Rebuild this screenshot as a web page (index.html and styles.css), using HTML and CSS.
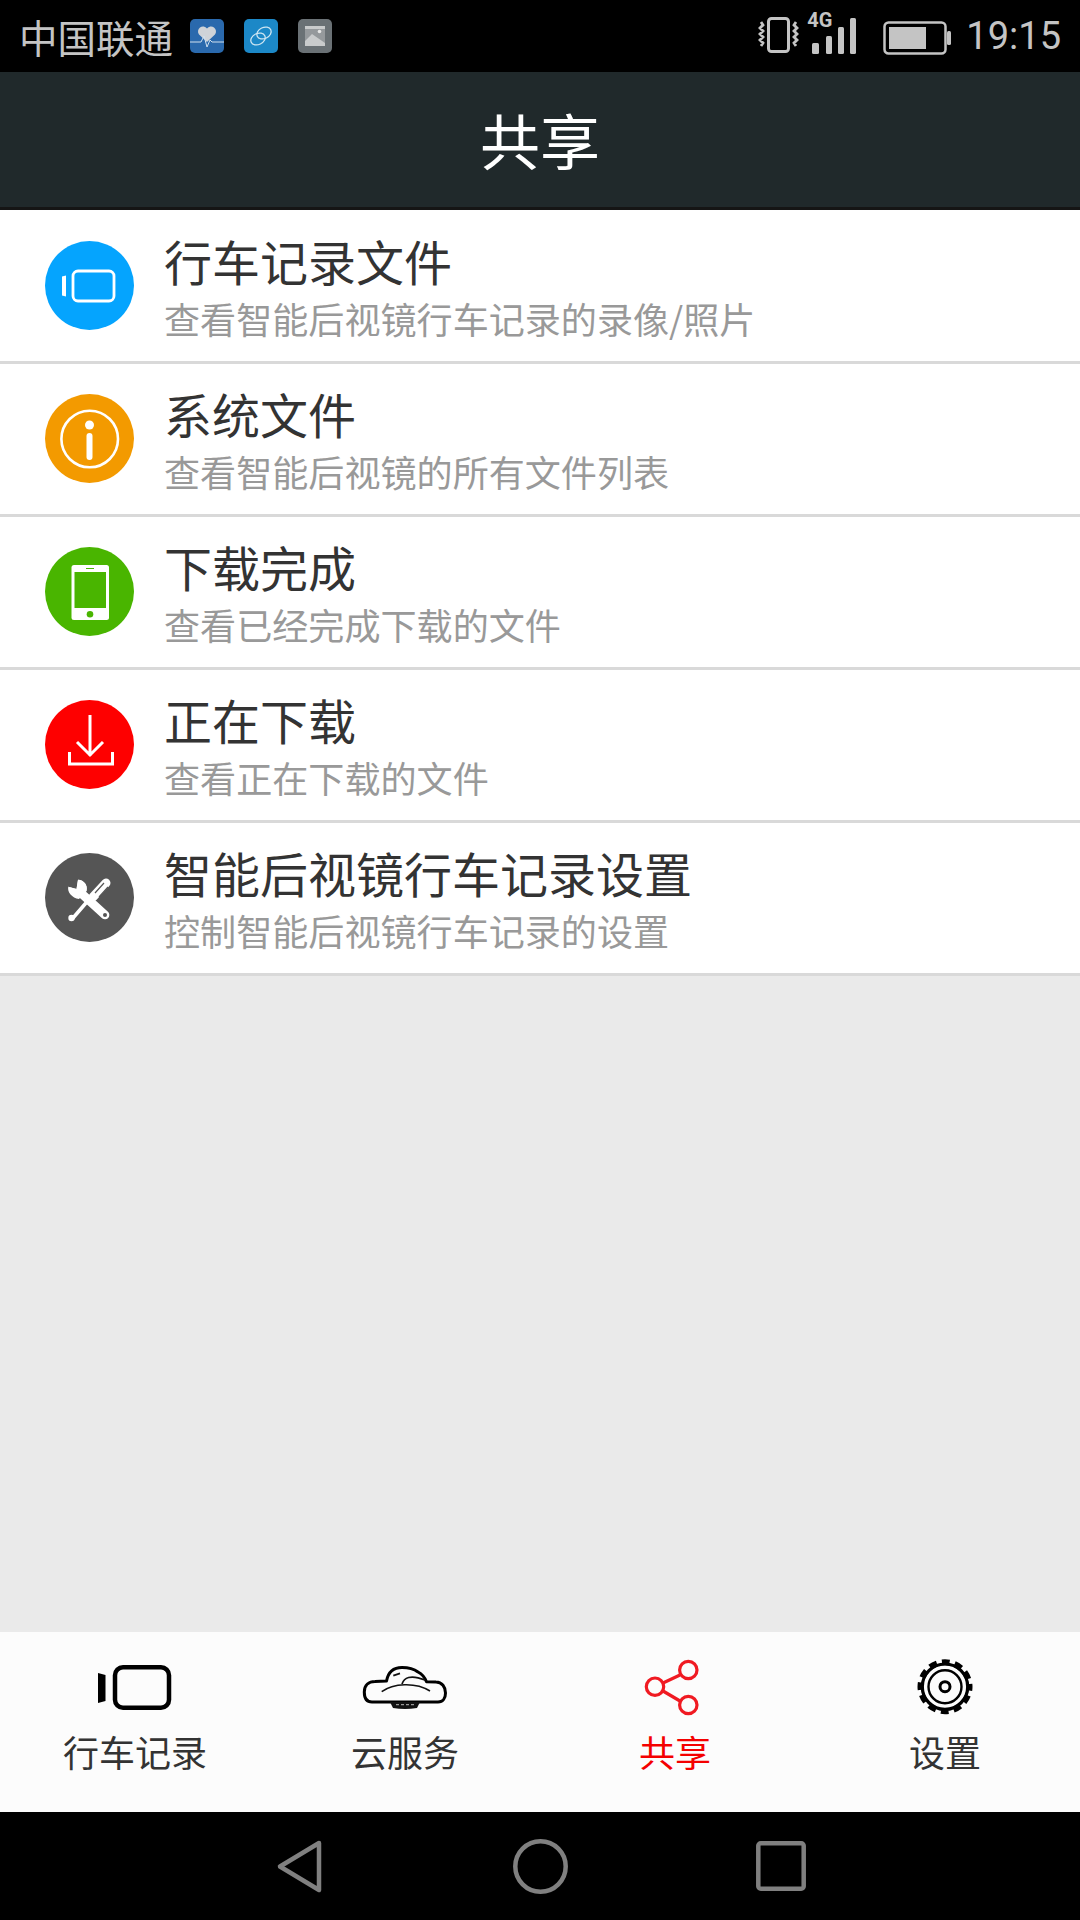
FILE: index.html
```html
<!DOCTYPE html>
<html lang="zh-CN">
<head>
<meta charset="utf-8">
<title>共享</title>
<link rel="stylesheet" href="styles.css">
</head>
<body>
<div class="screen">
  <header class="status">
    <div class="status-left">
      <span class="carrier">中国联通</span>
      <svg class="app-icon" viewBox="0 0 34 34"><rect width="34" height="34" rx="5" fill="#2a69ad"/><path d="M17 23 9 15.500a4.800 4.800 0 0 1 8-6 4.800 4.800 0 0 1 8 6z" fill="#cfd3d8"/><path d="M0 23h11l3-6 3 11 3-7 2 2h12" fill="none" stroke="#cfe0ee" stroke-width="1"/></svg>
      <svg class="app-icon" viewBox="0 0 34 34"><rect width="34" height="34" rx="5" fill="#1c88c7"/><ellipse cx="20" cy="14" rx="7.500" ry="5.500" fill="none" stroke="#cfe6f2" stroke-width="1.300" transform="rotate(-25 20 14)"/><ellipse cx="14" cy="20" rx="7.500" ry="5.500" fill="none" stroke="#cfe6f2" stroke-width="1.300" transform="rotate(-25 14 20)"/></svg>
      <svg class="app-icon" viewBox="0 0 34 34"><rect width="34" height="34" rx="5" fill="#6a7175"/><rect x="7" y="7" width="20" height="20" fill="#c9cbcc"/><path d="M7 22l7-7 13 9V10H7z" fill="#6a7175" opacity=".55"/><circle cx="21.500" cy="12.500" r="1.800" fill="#e6e6e6"/></svg>
    </div>
    <div class="status-right">
      <svg class="vibrate" viewBox="0 0 42 40"><rect x="10.500" y="2.500" width="20" height="33" rx="3" fill="none" stroke="#c4c4c4" stroke-width="3"/><path d="M3 6l2 3-3 3 3 3-3 3 3 3-3 3 3 3-2 3M38 6l-2 3 3 3-3 3 3 3-3 3 3 3-3 3 2 3" fill="none" stroke="#c4c4c4" stroke-width="2.800"/></svg>
      <div class="signal">
        <span class="net">4G</span>
        <svg class="bars" viewBox="0 0 48 36"><rect x="4" y="25" width="7" height="11" rx="1.500" fill="#c4c4c4"/><rect x="18" y="18" width="6" height="18" rx="1.500" fill="#c4c4c4"/><rect x="30" y="9" width="6" height="27" rx="1.500" fill="#c4c4c4"/><rect x="42" y="0" width="6" height="36" rx="1.500" fill="#c4c4c4"/></svg>
      </div>
      <svg class="battery" viewBox="0 0 68 34"><rect x="1.500" y="1.500" width="61" height="31" rx="4" fill="none" stroke="#c4c4c4" stroke-width="2.500"/><rect x="6" y="6" width="37" height="22" fill="#c4c4c4"/><rect x="64" y="10" width="4" height="14" rx="1.500" fill="#c4c4c4"/></svg>
      <span class="clock">19:15</span>
    </div>
  </header>

  <div class="appbar">共享</div>

  <main class="content">
    <ul class="list">
      <li class="row">
        <svg class="badge" viewBox="0 0 89 89"><circle cx="44.500" cy="44.500" r="44.500" fill="#05a4fe"/><path d="M17 35.500l4-1v21l-4-1z" fill="#fff"/><rect x="28" y="30" width="41" height="30" rx="5" fill="none" stroke="#fff" stroke-width="2.800"/></svg>
        <div class="text"><h2 class="title">行车记录文件</h2><p class="sub">查看智能后视镜行车记录的录像/照片</p></div>
      </li>
      <li class="row">
        <svg class="badge" viewBox="0 0 89 89"><circle cx="44.500" cy="44.500" r="44.500" fill="#f39a00"/><circle cx="44.700" cy="45" r="28.300" fill="none" stroke="#fff" stroke-width="2.600"/><circle cx="44.500" cy="31" r="4.500" fill="#fff"/><path d="M44.500 42v21" stroke="#fff" stroke-width="6" stroke-linecap="round"/></svg>
        <div class="text"><h2 class="title">系统文件</h2><p class="sub">查看智能后视镜的所有文件列表</p></div>
      </li>
      <li class="row">
        <svg class="badge" viewBox="0 0 89 89"><circle cx="44.500" cy="44.500" r="44.500" fill="#49b500"/><rect x="26.500" y="18" width="37.500" height="55" rx="2.500" fill="#fff"/><rect x="29.500" y="25" width="31.500" height="36" fill="#49b500"/><circle cx="45" cy="67.300" r="3.300" fill="#49b500"/><path d="M41 21.500h8" stroke="#49b500" stroke-width="1"/></svg>
        <div class="text"><h2 class="title">下载完成</h2><p class="sub">查看已经完成下载的文件</p></div>
      </li>
      <li class="row">
        <svg class="badge" viewBox="0 0 89 89"><circle cx="44.500" cy="44.500" r="44.500" fill="#fe0000"/><path d="M45 15v41M32 42l13 13 13-13M24.500 52v12h43V52" fill="none" stroke="#fff" stroke-width="3"/></svg>
        <div class="text"><h2 class="title">正在下载</h2><p class="sub">查看正在下载的文件</p></div>
      </li>
      <li class="row">
        <svg class="badge" viewBox="0 0 89 89"><circle cx="44.500" cy="44.500" r="44.500" fill="#555"/><path d="M28 65 43.500 47" stroke="#fff" stroke-width="3.500" stroke-linecap="round"/><circle cx="26.500" cy="65" r="3.200" fill="#fff"/><path d="M48 44 61 30" stroke="#fff" stroke-width="9" stroke-linecap="round"/><path d="M50 40l9-10M54 44l9-10" stroke="#555" stroke-width="1.200"/><path d="M23.300 33.700 31.500 36 33 26.700C39 27 43 32 41.500 38L36 42.500 60 62" fill="#fff"/><path d="M23.300 33.700 31.500 36 33 26.700C39 27 43 32 41.500 38L34 46C27 45 22 39 23.300 33.700Z" fill="#fff"/><path d="M37 41 60 62" stroke="#fff" stroke-width="8.700" stroke-linecap="round"/><circle cx="60" cy="62" r="2" fill="#555"/></svg>
        <div class="text"><h2 class="title">智能后视镜行车记录设置</h2><p class="sub">控制智能后视镜行车记录的设置</p></div>
      </li>
    </ul>
  </main>

  <nav class="tabs">
    <div class="tab">
      <svg class="tab-icon" viewBox="0 0 90 60"><path d="M8 17l7.500 2v26l-7.500 2z" fill="#000"/><rect x="25" y="11.200" width="54" height="40.600" rx="8" fill="none" stroke="#000" stroke-width="4.500"/></svg>
      <span class="tab-label">行车记录</span>
    </div>
    <div class="tab">
      <svg class="tab-icon" viewBox="0 0 90 60"><path d="M12 46C6 46 4.300 42 4.300 36 4.300 29 9 25.500 15 25.500L26.500 25C28 17 33 11.500 42 11.500 49 11.500 54 13 58 16 62 18 65 22 66.500 25.700L76 26C82 26 85.500 31 85.500 37 85.500 42 83 46 78 46Z" fill="none" stroke="#000" stroke-width="3" stroke-linejoin="round"/><path d="M21.700 35.700C33 27 56 26 70 35" fill="none" stroke="#111" stroke-width="1.500"/><path d="M42 28C44 22 50 18 65 24M33.300 19.700 40 17.300" fill="none" stroke="#111" stroke-width="1.800"/><path d="M30 46H60L57 52Q45 54 33 52Z" fill="#111"/><path d="M36 48.700H54" stroke="#999" stroke-width="1.200" stroke-dasharray="3 2"/></svg>
      <span class="tab-label">云服务</span>
    </div>
    <div class="tab active">
      <svg class="tab-icon" viewBox="0 0 90 60"><g fill="none" stroke="#f01a22" stroke-width="3.200"><circle cx="25" cy="30.700" r="8.700"/><circle cx="58.300" cy="14" r="8.700"/><circle cx="58.300" cy="49" r="8.700"/><path d="M33 27l17-8M33 35l17 10"/></g></svg>
      <span class="tab-label">共享</span>
    </div>
    <div class="tab">
      <svg class="tab-icon" viewBox="0 0 90 60"><g fill="none" stroke="#000"><circle cx="45" cy="30.700" r="22.700" stroke-width="3.200"/><circle cx="45" cy="30.700" r="16.500" stroke-width="2.400"/><circle cx="45" cy="30.700" r="5" stroke-width="3"/><circle cx="45" cy="30.700" r="24.500" stroke-width="6" stroke-dasharray="7.700 5.130" stroke-dashoffset="3.850"/></g></svg>
      <span class="tab-label">设置</span>
    </div>
  </nav>

  <footer class="sysnav">
    <svg class="sys back" viewBox="0 0 47 55"><path d="M43 4 4 27.500 43 51z" fill="none" stroke="#808080" stroke-width="4.500" stroke-linejoin="round"/></svg>
    <svg class="sys home" viewBox="0 0 55 55"><circle cx="27.500" cy="27.500" r="25.200" fill="none" stroke="#808080" stroke-width="4.500"/></svg>
    <svg class="sys recent" viewBox="0 0 50 50"><rect x="2.300" y="2.300" width="45.400" height="45.400" rx="2.500" fill="none" stroke="#808080" stroke-width="4.500"/></svg>
  </footer>
</div>
</body>
</html>
```

FILE: styles.css
```css
* { box-sizing: border-box; }
html, body { margin: 0; padding: 0; }
body { width: 1080px; height: 1920px; overflow: hidden; font-family: "Noto Sans CJK SC", "Noto Sans", sans-serif; }
.screen { width: 1080px; height: 1920px; display: flex; flex-direction: column; background: #eaeaea; }

.status { height: 72px; background: #000; display: flex; justify-content: space-between; align-items: center; padding: 0 19px 0 19px; color: #c4c4c4; }
.status-left { display: flex; align-items: center; }
.carrier { font-size: 38.500px; line-height: 72px; margin-right: 17px; }
.app-icon { width: 34px; height: 34px; margin-right: 20px; }
.status-right { display: flex; align-items: center; }
.vibrate { width: 42px; height: 40px; margin-right: 8px; }
.signal { position: relative; width: 48px; height: 54px; margin-right: 27px; }
.net { position: absolute; left: -1px; top: 1px; font: bold 20px/20px "Roboto", sans-serif; color: #c4c4c4; }
.bars { position: absolute; left: 0; top: 9px; width: 48px; height: 36px; }
.battery { width: 68px; height: 34px; margin-top: 4px; margin-right: 15px; }
.clock { font: 38px/72px "Roboto", sans-serif; }

.appbar { height: 138px; flex: none; background: #20292b; border-bottom: 3px solid #151515; color: #fff; font-size: 60px; line-height: 133px; text-align: center; }

.content { flex: 1; min-height: 0; }
.list { list-style: none; margin: 0; padding: 0; background: #fff; }
.row { height: 153px; display: flex; align-items: center; padding: 0 0 1px 45px; border-bottom: 3px solid #d9d9d9; }
.row:first-child { height: 154px; }
.badge { width: 89px; height: 89px; flex: none; margin-right: 30px; }
.text { display: flex; flex-direction: column; padding-top: 3px; }
.title { margin: 0; font-size: 48px; font-weight: 400; line-height: 60px; color: #333; }
.sub { margin: 0; font-size: 36.100px; line-height: 52px; padding-top: 2px; color: #999; }

.tabs { height: 180px; flex: none; display: grid; grid-template-columns: repeat(4, 270px); background: #fcfcfc; }
.tab { display: flex; flex-direction: column; align-items: center; padding-top: 24px; }
.tab-icon { width: 90px; height: 60px; }
.tab-label { margin-top: 10px; font-size: 36px; line-height: 50px; color: #333; }
.tab.active .tab-label { color: #f40000; }

.sysnav { height: 108px; flex: none; background: #000; display: flex; align-items: center; }
.sys { flex: none; }
.back { width: 47px; height: 55px; margin-left: 276px; }
.home { width: 55px; height: 55px; margin-left: 190px; }
.recent { width: 50px; height: 50px; margin-left: 188px; }
```
